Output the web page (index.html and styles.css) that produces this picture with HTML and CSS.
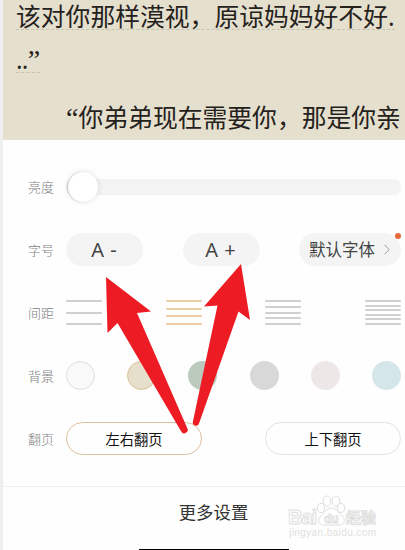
FILE: index.html
```html
<!DOCTYPE html>
<html lang="zh-CN">
<head>
    <meta charset="UTF-8">
    <meta name="viewport" content="width=device-width, initial-scale=1.0">
    <title>阅读设置</title>
    <link rel="stylesheet" href="styles.css">
</head>
<body>
    <div class="screen">
        <div class="reader">
            <p class="line"><span class="marked">该对你那样漠视，原谅妈妈好不好.</span></p>
            <p class="line"><span class="marked"><span class="dots">..</span><span class="quote">”</span></span></p>
            <p class="line indent"><span class="quote">“</span>你弟弟现在需要你，那是你亲</p>
        </div>

        <div class="panel">
            <div class="row row-light">
                <span class="label">亮度</span>
                <div class="slider"><div class="knob"></div></div>
            </div>

            <div class="row row-size">
                <span class="label">字号</span>
                <div class="options">
                    <button class="pill pill-size">A -</button>
                    <button class="pill pill-size">A +</button>
                    <button class="pill pill-font">默认字体
                        <svg class="chevron" width="6" height="11" viewBox="0 0 6 11"><path d="M0.6 0.8L5.2 5.5L0.6 10.2"/></svg>
                        <i class="dot"></i>
                    </button>
                </div>
            </div>

            <div class="row row-space">
                <span class="label">间距</span>
                <div class="options">
                    <div class="lines"><i></i><i></i><i></i></div>
                    <div class="lines active"><i></i><i></i><i></i><i></i></div>
                    <div class="lines"><i></i><i></i><i></i><i></i><i></i></div>
                    <div class="lines"><i></i><i></i><i></i><i></i><i></i><i></i></div>
                </div>
            </div>

            <div class="row row-bg">
                <span class="label">背景</span>
                <div class="options">
                    <div class="swatch white"></div>
                    <div class="swatch beige"></div>
                    <div class="swatch green"></div>
                    <div class="swatch gray"></div>
                    <div class="swatch pink"></div>
                    <div class="swatch blue"></div>
                </div>
            </div>

            <div class="row row-turn">
                <span class="label">翻页</span>
                <div class="options">
                    <button class="turn selected">左右翻页</button>
                    <button class="turn">上下翻页</button>
                </div>
            </div>
        </div>

        <div class="more">更多设置</div>
        <div class="home-bar"></div>

        <svg class="arrows" width="405" height="550" viewBox="0 0 405 550">
            <path d="M106 277L151 311.500L137 313L187.200 428A3.300 3.300 0 0 1 181.200 431.500L117.500 323L107.500 333Z"/>
            <path d="M241 264L250 320L238.500 311.500L199 423.500A3.200 3.200 0 0 1 192.800 422L217.500 305.500L204 306.500Z"/>
        </svg>

        <svg class="watermark" width="100" height="50" viewBox="0 0 100 50">
            <g class="paw">
                <ellipse cx="35" cy="18" rx="3.500" ry="4.500"/>
                <ellipse cx="41" cy="11" rx="3.800" ry="5"/>
                <ellipse cx="50" cy="11" rx="3.800" ry="5"/>
                <ellipse cx="55" cy="18" rx="3.500" ry="4.500"/>
                <path d="M45.500 18C40 18 39 23 35 26C30 30 33 36 40 35H51C58 36 61 30 56 26C52 23 51 18 45.500 18Z"/>
            </g>
            <text x="2" y="34" class="wm-name" textLength="29">Bai</text>
            <text x="38" y="33" class="wm-du">du</text>
            <text x="60" y="33" class="wm-cn">经验</text>
            <text x="3" y="46" class="wm-url" textLength="87">jingyan.baidu.com</text>
        </svg>
    </div>
</body>
</html>
```
FILE: styles.css
```css
* {
    margin: 0;
    padding: 0;
    box-sizing: border-box;
}

body {
    background-color: #efefef;
    font-family: "Noto Sans", "Noto Sans CJK SC", sans-serif;
}

.screen {
    position: relative;
    height: 550px;
    padding-left: 3px;
    overflow: hidden;
    display: flex;
    flex-direction: column;
}

.reader {
    height: 140px;
    flex: none;
    background-color: #e5dfcd;
    color: #25221d;
    padding-left: 13px;
    overflow: hidden;
    white-space: nowrap;
}

.line {
    height: 43px;
    line-height: 32px;
    font-size: 24.8px;
}

.line.indent {
    padding: 15px 0 0 50px;
    height: 54px;
}

.marked {
    display: inline-block;
    height: 30px;
    border-bottom: 1px dashed #c6c1b1;
}

.dots {
    letter-spacing: -0.8px;
}

.quote {
    display: inline-block;
    width: 12.5px;
    line-height: 1;
    font-family: "Liberation Serif", serif;
    font-size: 28px;
}

.panel {
    height: 346px;
    flex: none;
    background-color: #fefefe;
    padding: 15px 4px 0 25px;
}

.row {
    display: flex;
    align-items: center;
    height: 63px;
}

.label {
    width: 38px;
    padding-bottom: 1px;
    flex: none;
    font-size: 13px;
    font-weight: 300;
    color: #808080;
}

.slider {
    flex: 1;
    height: 16px;
    border-radius: 8px;
    background-color: #f3f3f3;
}

.knob {
    width: 30px;
    height: 30px;
    margin-top: -7px;
    margin-left: 2px;
    border-radius: 50%;
    background-color: #fff;
    box-shadow: 0 0 6px rgba(0, 0, 0, 0.12), -1px 0 1px rgba(0, 0, 0, 0.15);
}

.options {
    flex: 1;
    display: flex;
    align-items: center;
    justify-content: space-between;
}

.pill {
    width: 77px;
    height: 33px;
    border: none;
    border-radius: 17px;
    background-color: #f4f4f4;
    color: #444;
    font-family: inherit;
    font-size: 20px;
}

.pill-size {
    padding-right: 1px;
    word-spacing: 1px;
}

.pill-font {
    position: relative;
    display: flex;
    align-items: center;
    justify-content: center;
    gap: 9px;
    width: 102px;
    padding: 0 1px 1px 0;
    font-size: 16.5px;
}

.chevron {
    fill: none;
    stroke: #999;
    stroke-width: 1;
}

.dot {
    position: absolute;
    top: 0;
    right: 0;
    width: 6px;
    height: 6px;
    border-radius: 50%;
    background-color: #e8693c;
}

.lines {
    display: flex;
    flex-direction: column;
    justify-content: space-between;
    width: 36px;
    height: 25px;
}

.lines i {
    height: 2px;
    border-radius: 1px;
    background-color: #d0d0d0;
}

.lines.active i {
    background-color: #ebcda8;
}

.swatch {
    width: 29px;
    height: 29px;
    border-radius: 50%;
}

.white {
    background-color: #f9f9f9;
    border: 1px solid #dedede;
}

.beige {
    background-color: #e6dfcb;
    border: 1px solid #dcc19b;
}

.green {
    background-color: #bccabe;
}

.gray {
    background-color: #d8d8d8;
}

.pink {
    background-color: #ede7e8;
}

.blue {
    background-color: #d5e6ea;
}

.turn {
    width: 136px;
    height: 33px;
    border: 1px solid #e2e2e2;
    border-radius: 17px;
    background-color: #fefefe;
    color: #111;
    font-family: inherit;
    font-size: 14.3px;
}

.turn.selected {
    border-color: #dcc0a0;
}

.more {
    flex: 1;
    padding-left: 19px;
    border-top: 1px solid #f0f0f0;
    background-color: #fefefe;
    line-height: 50px;
    text-align: center;
    font-size: 17.4px;
    color: #333;
}

.home-bar {
    position: absolute;
    left: 139px;
    bottom: 0;
    width: 150px;
    height: 1px;
    background-color: #000;
}

.arrows {
    position: absolute;
    top: 0;
    left: 0;
    fill: #ed1c24;
}

.watermark {
    position: absolute;
    left: 286px;
    top: 490px;
    fill: #fff;
    stroke: #dedede;
    stroke-width: 1;
    font-family: "Liberation Sans", "Noto Sans CJK SC", sans-serif;
}

.wm-name {
    font-size: 20px;
    font-weight: bold;
}

.wm-du {
    font-size: 12px;
    font-weight: bold;
}

.wm-cn {
    font-size: 15px;
    font-weight: bold;
}

.wm-url {
    font-size: 10px;
    fill: #e0e0e0;
    stroke: none;
}
```
